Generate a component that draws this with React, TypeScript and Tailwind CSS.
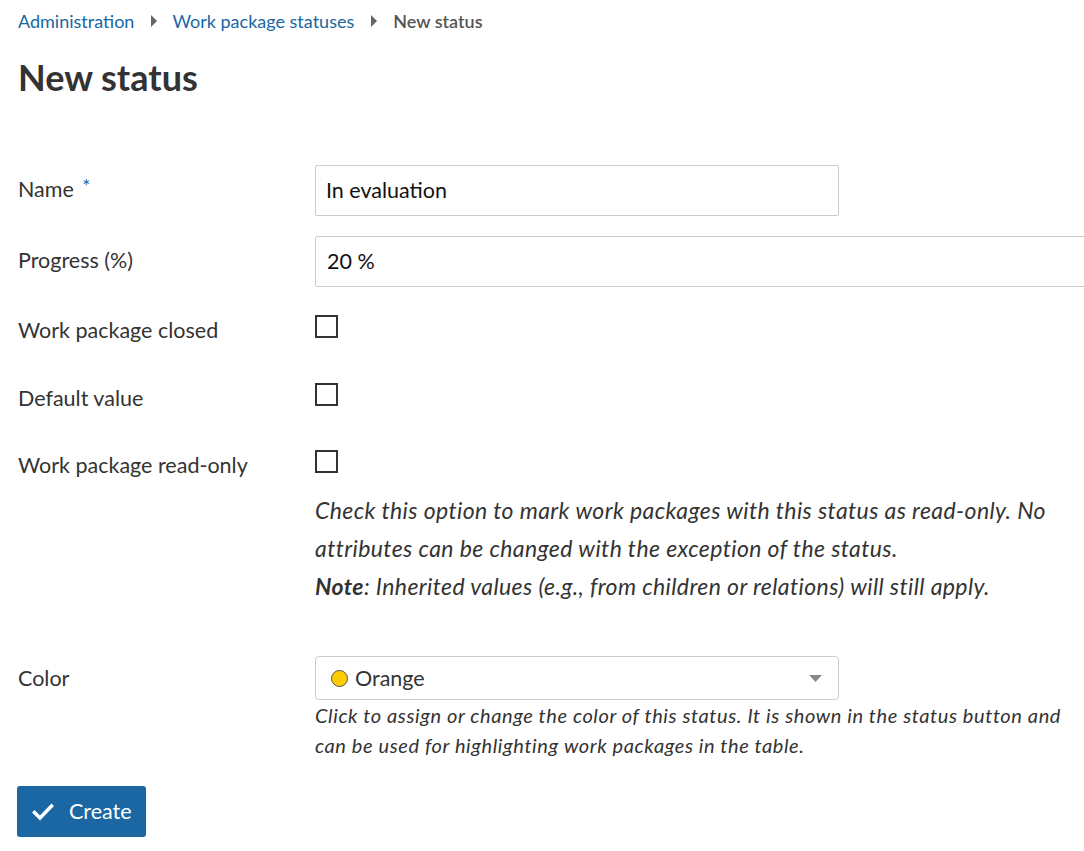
import React from 'react';

const Caret = () => (
  <svg width="8" height="12" viewBox="0 0 8 12" className="fill-[#666]">
    <path d="M1 0 L7 6 L1 12 Z" />
  </svg>
);

const Checkbox = () => (
  <div className="w-[23px] h-[23px] border-2 border-[#333] bg-white" />
);

const App: React.FC = () => {
  return (
    <div className="min-h-screen w-full overflow-hidden bg-white text-[#333] pl-[18px]" style={{ fontFamily: 'Lato, "Open Sans", sans-serif' }}>
      {/* breadcrumb */}
      <div className="h-[42px] flex items-center text-[18px]">
        <span className="text-[#1a67a3]">Administration</span>
        <span className="ml-[16px] mr-[14px] flex items-center"><Caret /></span>
        <span className="text-[#1a67a3]">Work package statuses</span>
        <span className="ml-[16px] mr-[15px] flex items-center"><Caret /></span>
        <span className="text-[#555] font-semibold">New status</span>
      </div>

      <h1 className="mt-[14px] text-[36px] leading-[42px] font-bold text-[#333]">New status</h1>

      <div className="mt-[67px] text-[21.5px]">
        {/* Name */}
        <div className="flex items-center h-[51px]">
          <label className="w-[297px] shrink-0 -mt-[2px]">
            Name <span className="relative -top-[4px] text-[#1a67a3] text-[19px] ml-[3px]">*</span>
          </label>
          <div className="w-[524px] h-[51px] border border-[#ccc] rounded-[2px] flex items-center px-[10px] text-[#111]">
            In evaluation
          </div>
        </div>

        {/* Progress */}
        <div className="flex items-center h-[51px] mt-[20px]">
          <label className="w-[297px] shrink-0 -mt-[2px]">Progress (%)</label>
          <div className="w-[800px] shrink-0 h-[51px] border border-[#ccc] rounded-[2px] flex items-center px-[11px] text-[#111]">
            20 %
          </div>
        </div>

        {/* closed */}
        <div className="flex items-start mt-[28px]">
          <label className="w-[297px] shrink-0 leading-[30px]">Work package closed</label>
          <Checkbox />
        </div>

        {/* default */}
        <div className="flex items-start mt-[38px]">
          <label className="w-[297px] shrink-0 leading-[30px]">Default value</label>
          <Checkbox />
        </div>

        {/* read-only */}
        <div className="flex items-start mt-[37px]">
          <label className="w-[297px] shrink-0 leading-[30px]">Work package read-only</label>
          <div>
            <Checkbox />
            <div className="mt-[18px] italic text-[23px] leading-[38px] tracking-[0.4px] w-[755px]">
              Check this option to mark work packages with this status as read-only. No attributes can be changed with the exception of the status.
              <br />
              <span className="font-bold">Note</span>: Inherited values (e.g., from children or relations) will still apply.
            </div>
          </div>
        </div>

        {/* Color */}
        <div className="flex items-start mt-[51px]">
          <label className="w-[297px] shrink-0 leading-[44px]">Color</label>
          <div>
            <div className="w-[524px] h-[44px] border border-[#ccc] rounded-[4px] flex items-center pl-[15px] pr-[16px]">
              <span className="w-[17px] h-[17px] rounded-full bg-[#fc0] border border-[#555] mr-[7px]" />
              <span className="flex-1">Orange</span>
              <svg width="13" height="7" viewBox="0 0 13 7" className="fill-[#888]">
                <path d="M0 0 H13 L6.5 7 Z" />
              </svg>
            </div>
            <div className="italic text-[20px] leading-[30px] tracking-[0.6px] w-[760px]">
              Click to assign or change the color of this status. It is shown in the status button and can be used for highlighting work packages in the table.
            </div>
          </div>
        </div>

        <button className="mt-[26px] -ml-px h-[51px] pl-[15px] pr-[14px] bg-[#1a67a3] text-white rounded-[3px] flex items-center gap-[15px] text-[21.5px]">
          <svg width="22" height="18" viewBox="0 0 22 18" fill="none" stroke="white" strokeWidth="3.6" strokeLinecap="square">
            <path d="M2.5 9.5 L8 15 L19.5 3" />
          </svg>
          Create
        </button>
      </div>
    </div>
  );
};

export default App;
